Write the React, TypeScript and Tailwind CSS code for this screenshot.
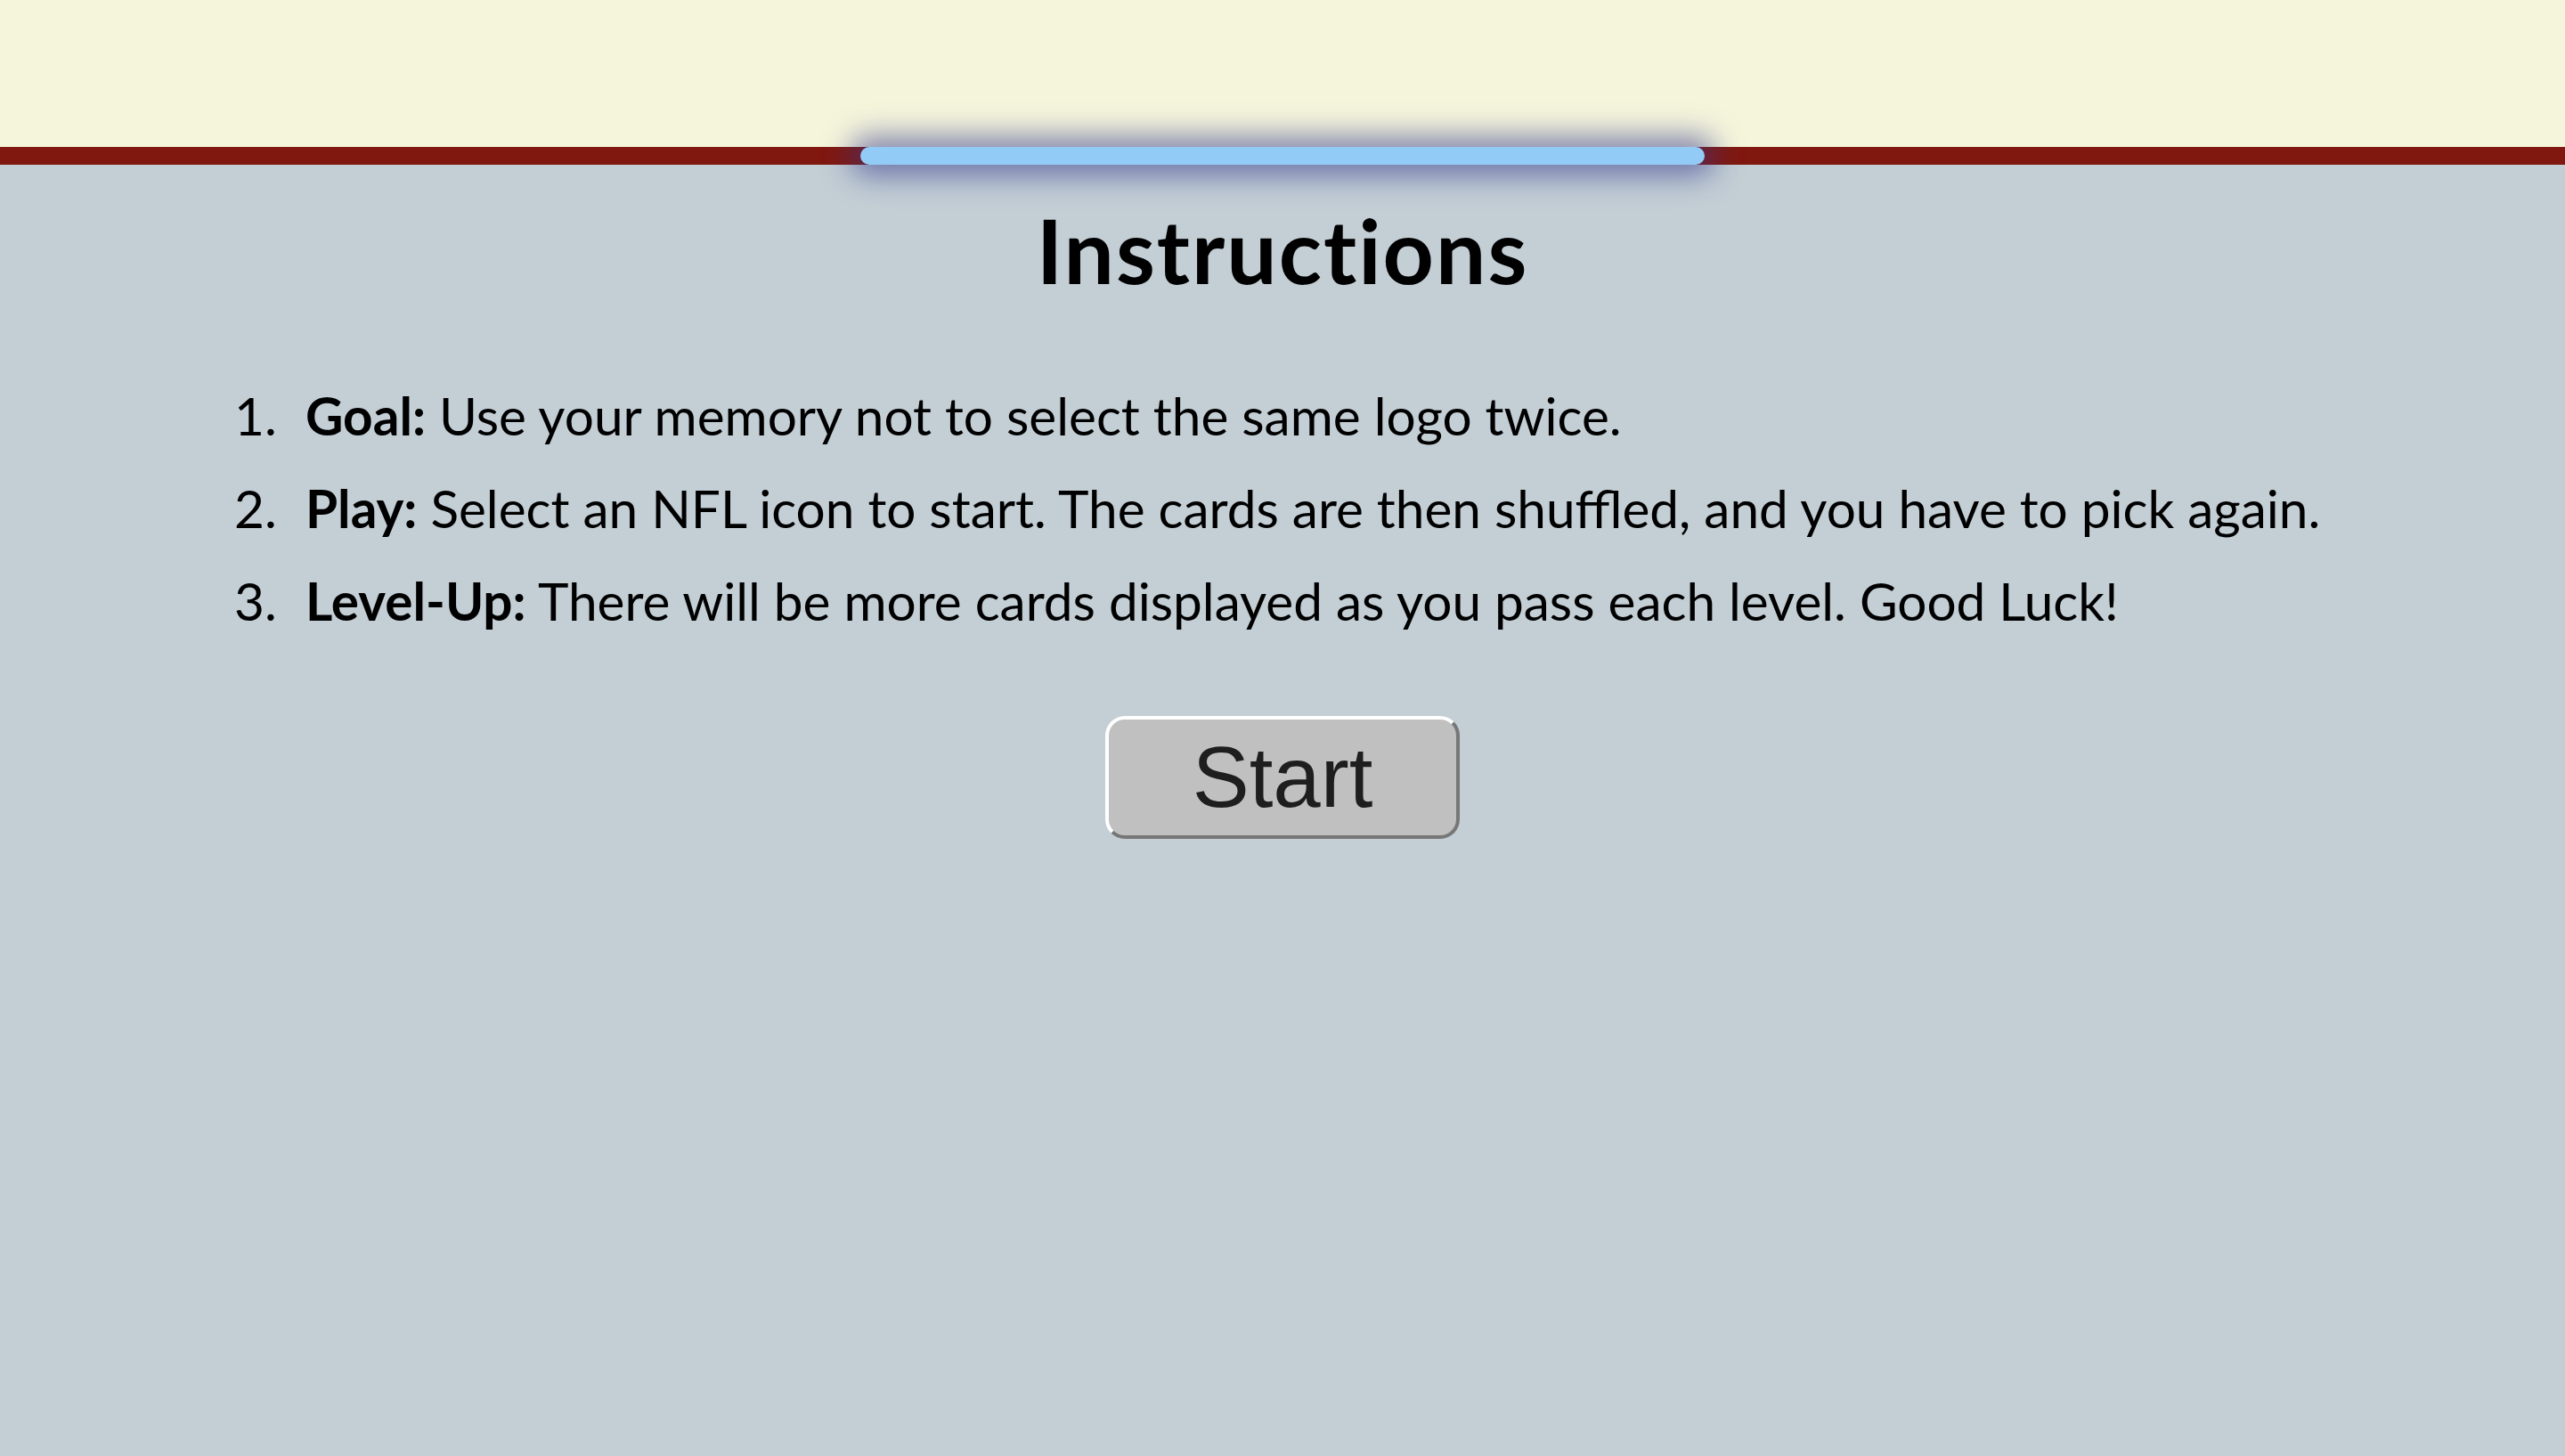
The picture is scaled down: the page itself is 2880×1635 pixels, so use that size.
import React from 'react';

const rules = [
  { label: 'Goal:', text: 'Use your memory not to select the same logo twice.' },
  { label: 'Play:', text: 'Select an NFL icon to start. The cards are then shuffled, and you have to pick again.' },
  { label: 'Level-Up:', text: 'There will be more cards displayed as you pass each level. Good Luck!' },
];

function App() {
  return (
    <div className="min-h-screen bg-[#c3ced5] font-['Lato',sans-serif] text-black">
      <header className="h-[165px] bg-[#f5f5dc]" />
      <div className="relative z-10 flex h-[20px] justify-center bg-[#811810]">
        <div className="h-full w-[948px] rounded-full bg-[#93cbf7] shadow-[0_0_32px_12px_rgba(52,56,140,0.6)]" />
      </div>

      <main className="flex flex-col items-center">
        <h1 className="mt-[35px] text-[100px] font-bold leading-[1.2] tracking-[2px]">Instructions</h1>

        <ol className="mt-[91px] flex w-full flex-col gap-[34px] pl-[263px]">
          {rules.map((rule, i) => (
            <li key={rule.label} className="flex text-[58.5px] leading-[70px]">
              <span className="w-[80px] shrink-0">{i + 1}.</span>
              <span>
                <b className="font-bold">{rule.label}</b> {rule.text}
              </span>
            </li>
          ))}
        </ol>

        <button className="mt-[95px] flex h-[138px] w-[398px] items-center justify-center rounded-[22px] border-4 border-t-white border-l-white border-r-[#777777] border-b-[#777777] bg-[#c0c0c0] font-['Liberation_Sans',Arial,sans-serif] text-[96px] text-[#1e1e1e]">
          Start
        </button>
      </main>
    </div>
  );
}

export default App;
